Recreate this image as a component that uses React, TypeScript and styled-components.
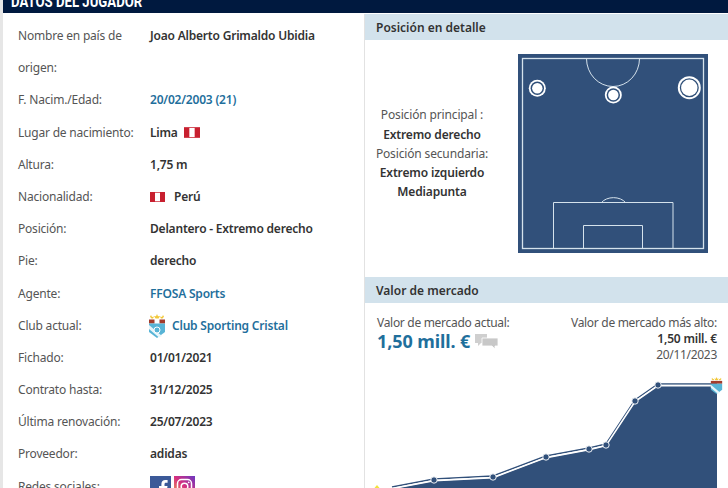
import styled, { createGlobalStyle } from "styled-components";

const GlobalStyle = createGlobalStyle`
  html, body {
    margin: 0;
    padding: 0;
    background: #fff;
  }
  body {
    font-family: "Noto Sans", "Liberation Sans", sans-serif;
    color: #333;
  }
`;

const Page = styled.div`
  width: 728px;
  height: 488px;
  overflow: hidden;
  background: #fff;
  border-left: 3px solid #e6e6e6;
  box-sizing: border-box;
`;

const TopBar = styled.div`
  height: 13px;
  margin-bottom: 1px;
  background: #00193f;
  overflow: hidden;
`;

const TopTitle = styled.h1`
  margin: -9px 0 0 8px;
  font-family: "Roboto", "Liberation Sans", sans-serif;
  font-size: 17px;
  line-height: 20px;
  font-weight: 700;
  color: #fff;
  text-transform: uppercase;
  transform: scaleX(0.775);
  transform-origin: left center;
`;

const Columns = styled.div`
  display: flex;
`;

const InfoPanel = styled.section`
  width: 362px;
  height: 474px;
  flex: none;
  box-sizing: border-box;
  padding: 6px 0 0 15px;
  border-right: 1px solid #e2e2e2;
`;

const InfoGrid = styled.dl`
  display: grid;
  grid-template-columns: 132px 1fr;
  grid-auto-rows: 32.2px;
  margin: 0;
  font-size: 12px;
  line-height: 32.2px;
`;

const Label = styled.dt`
  color: #555;
  letter-spacing: -0.2px;
`;

const Value = styled.dd<{ $link?: boolean; $gap?: number }>`
  display: flex;
  align-items: center;
  gap: ${(p) => p.$gap ?? 6}px;
  margin: 0;
  font-weight: 600;
  letter-spacing: -0.2px;
  white-space: nowrap;
  color: ${(p) => (p.$link ? "#1f6f9c" : "#333")};
`;

const CrestSlot = styled.span`
  display: flex;
  margin-left: -2px;
`;

const Side = styled.div`
  flex: 1;
  min-width: 0;
`;

const PanelHead = styled.h2`
  margin: 0;
  height: 26px;
  padding-left: 11px;
  background: #d2e2ec;
  font-size: 12px;
  line-height: 27px;
  font-weight: 600;
  color: #333;
`;

const PositionBody = styled.div`
  display: flex;
  align-items: center;
  gap: 19px;
  height: 237px;
  box-sizing: border-box;
  padding: 0 0 10px 0;
`;

const PositionText = styled.div`
  width: 134px;
  flex: none;
  text-align: center;
  font-size: 12px;
  line-height: 19.3px;
  letter-spacing: -0.15px;
  color: #555;
`;

const PositionName = styled.div`
  font-weight: 600;
  color: #333;
`;

const MarketBody = styled.div`
  padding: 12px 11px 0 12px;
  font-size: 12px;
  line-height: 16px;
`;

const MarketStats = styled.div`
  display: flex;
  justify-content: space-between;
  color: #555;
  letter-spacing: -0.3px;
`;

const CurrentValue = styled.div`
  display: flex;
  align-items: center;
  gap: 5px;
  margin-top: -1px;
  font-size: 18px;
  line-height: 22px;
  font-weight: 700;
  letter-spacing: -0.1px;
  color: #1f6f9c;
`;

const HighValue = styled.div`
  text-align: right;
`;

const HighAmount = styled.div`
  font-weight: 600;
  letter-spacing: -0.2px;
  color: #333;
`;

const Chart = styled.svg`
  display: block;
  margin: 7px 0 0 -12px;
`;

const SocialLink = styled.a`
  display: block;
  width: 21px;
  height: 21px;
`;

const Socials = styled.div`
  display: flex;
  gap: 3px;
`;

const Crest = ({ width, height }: { width: number; height: number }) => (
  <svg width={width} height={height} viewBox="0 0 18 24">
    <path d="M3 1l1 2 2-.5L5 4.500H3.500L2 2.700zM9 0l1 2.300 2-.3-1.300 2.500H7.500L6 2l2 .3zM15 1l1 1.700-1.500 1.800H13l-1-2 2 .5z" fill="#f2c83a" />
    <rect x="1" y="5" width="16" height="5" fill="#fff" />
    <rect x="1" y="5.500" width="5.500" height="4" fill="#a33c2c" />
    <rect x="11.500" y="5.500" width="5.500" height="4" fill="#a33c2c" />
    <path d="M1 9.500h16V18l-8 6-8-6z" fill="#58b4d6" />
    <path d="M1 11l13 11-3 1.500L1 15z" fill="#e8f5fa" />
    <circle cx="9" cy="16" r="3" fill="#58b4d6" stroke="#fff" />
  </svg>
);

const PeruFlag = ({ width, height }: { width: number; height: number }) => (
  <svg width={width} height={height} viewBox="0 0 15 10">
    <rect width="15" height="10" fill="#c8202f" />
    <rect x="5" y="0.700" width="5" height="8.600" fill="#fff" />
  </svg>
);

const PitchMarker = ({ x, y, big }: { x: number; y: number; big?: boolean }) => (
  <g>
    <circle cx={x} cy={y} r={big ? 11.5 : 8.5} fill="#fff" />
    <circle cx={x} cy={y} r={big ? 9.5 : 6.7} fill="#2f4f78" />
    <circle cx={x} cy={y} r={big ? 8.2 : 5.2} fill="#fff" />
  </g>
);

const Pitch = () => (
  <svg width="190" height="199" viewBox="0 0 190 199">
    <rect width="190" height="199" fill="#31507a" />
    <g fill="none" stroke="#d5e2ec" strokeWidth="1">
      <rect x="4.500" y="4.500" width="181" height="190" strokeWidth="1.300" />
      <path d="M68.500 4.500a26.500 28 0 0 0 53 0" />
      <path d="M35.500 194.500V148.500H155V194.500" />
      <path d="M65.500 194.500V171.500H124.500V194.500" />
      <path d="M83.500 148.500a14 10 0 0 1 24 0" />
    </g>
    <PitchMarker x={19.3} y={34.3} />
    <PitchMarker x={95.3} y={41} />
    <PitchMarker x={171.3} y={33.7} big />
  </svg>
);

const CommentIcon = () => (
  <svg width="23" height="15" viewBox="0 0 23 15">
    <path d="M0 0h12v9H6l-3 3V9H0z" fill="#cfcfcf" />
    <path d="M7 4h16v8h-3v3l-3-3H7z" fill="#c8c8c8" stroke="#fff" strokeWidth="0.800" />
  </svg>
);

// puntos del gráfico, relativos al svg (y=0 en la línea 370 de la página)
const points: [number, number][] = [
  [27, 118],
  [69, 110],
  [128, 107],
  [181, 87],
  [224, 79],
  [241, 75],
  [270, 31],
  [293, 15],
  [352, 15],
];

const toPath = (dy: number) =>
  points.map(([x, y], i) => `${i === 0 ? "M" : "L"}${x} ${y + dy}`).join(" ");

const MarketChart = () => (
  <Chart width="363" height="118" viewBox="0 0 363 118">
    <path d={`${toPath(1)} L352 118 L27 118 Z`} fill="#31507a" />
    <path d={toPath(-1)} fill="none" stroke="#31507a" strokeWidth="1.500" />
    <path d={toPath(0.6)} fill="none" stroke="#fff" strokeWidth="1.600" />
    {points.slice(1, -1).map(([x, y]) => (
      <circle key={x} cx={x} cy={y} r="3.200" fill="#31507a" stroke="#fff" strokeWidth="0.900" />
    ))}
    <path d="M12 115l2.500 3h-5z" fill="#f2e23a" />
    <svg x="345" y="7" width="13" height="17" viewBox="0 0 18 24">
      <path d="M3 1l1 2 2-.5L5 4.500H3.500L2 2.700zM9 0l1 2.300 2-.3-1.300 2.500H7.500L6 2l2 .3zM15 1l1 1.700-1.500 1.800H13l-1-2 2 .5z" fill="#f2c83a" />
      <rect x="1" y="5.500" width="16" height="4" fill="#a33c2c" />
      <path d="M1 9.500h16V18l-8 6-8-6z" fill="#58b4d6" />
      <path d="M1 11l13 11-3 1.500L1 15z" fill="#e8f5fa" />
    </svg>
  </Chart>
);

const App = () => (
  <>
    <GlobalStyle />
    <Page>
      <TopBar>
        <TopTitle>Datos del jugador</TopTitle>
      </TopBar>
      <Columns>
        <InfoPanel>
          <InfoGrid>
            <Label>Nombre en país de</Label>
            <Value>Joao Alberto Grimaldo Ubidia</Value>
            <Label>origen:</Label>
            <Value />
            <Label>F. Nacim./Edad:</Label>
            <Value $link>20/02/2003 (21)</Value>
            <Label>Lugar de nacimiento:</Label>
            <Value>
              Lima <PeruFlag width={16} height={11} />
            </Value>
            <Label>Altura:</Label>
            <Value>1,75 m</Value>
            <Label>Nacionalidad:</Label>
            <Value $gap={9}>
              <PeruFlag width={15} height={10} /> Perú
            </Value>
            <Label>Posición:</Label>
            <Value>Delantero - Extremo derecho</Value>
            <Label>Pie:</Label>
            <Value>derecho</Value>
            <Label>Agente:</Label>
            <Value $link>FFOSA Sports</Value>
            <Label>Club actual:</Label>
            <Value $link>
              <CrestSlot>
                <Crest width={18} height={24} />
              </CrestSlot>
              Club Sporting Cristal
            </Value>
            <Label>Fichado:</Label>
            <Value>01/01/2021</Value>
            <Label>Contrato hasta:</Label>
            <Value>31/12/2025</Value>
            <Label>Última renovación:</Label>
            <Value>25/07/2023</Value>
            <Label>Proveedor:</Label>
            <Value>adidas</Value>
            <Label>Redes sociales:</Label>
            <Value>
              <Socials>
                <SocialLink>
                  <svg width="21" height="21" viewBox="0 0 21 21">
                    <rect width="21" height="21" fill="#3b5998" />
                    <path d="M14.500 21v-8h2.600l.4-3h-3V8.200c0-.9.3-1.500 1.500-1.500h1.600V4.100c-.3 0-1.200-.1-2.300-.1-2.300 0-3.900 1.400-3.900 4V10H9v3h2.400v8z" fill="#fff" />
                  </svg>
                </SocialLink>
                <SocialLink>
                  <svg width="21" height="21" viewBox="0 0 21 21">
                    <defs>
                      <linearGradient id="ig" x1="0" y1="1" x2="1" y2="0">
                        <stop offset="0" stopColor="#f0b04a" />
                        <stop offset="0.5" stopColor="#d62f7f" />
                        <stop offset="1" stopColor="#6a38c2" />
                      </linearGradient>
                    </defs>
                    <rect width="21" height="21" fill="url(#ig)" />
                    <rect x="3.500" y="3.500" width="14" height="14" rx="4" fill="none" stroke="#fff" strokeWidth="1.500" />
                    <circle cx="10.500" cy="10.500" r="3.300" fill="none" stroke="#fff" strokeWidth="1.500" />
                    <circle cx="14.700" cy="6.300" r="0.900" fill="#fff" />
                  </svg>
                </SocialLink>
              </Socials>
            </Value>
          </InfoGrid>
        </InfoPanel>
        <Side>
          <PanelHead>Posición en detalle</PanelHead>
          <PositionBody>
            <PositionText>
              <div>Posición principal :</div>
              <PositionName>Extremo derecho</PositionName>
              <div>Posición secundaria:</div>
              <PositionName>Extremo izquierdo</PositionName>
              <PositionName>Mediapunta</PositionName>
            </PositionText>
            <Pitch />
          </PositionBody>
          <PanelHead>Valor de mercado</PanelHead>
          <MarketBody>
            <MarketStats>
              <div>
                Valor de mercado actual:
                <CurrentValue>
                  1,50 mill. € <CommentIcon />
                </CurrentValue>
              </div>
              <HighValue>
                Valor de mercado más alto:
                <HighAmount>1,50 mill. €</HighAmount>
                20/11/2023
              </HighValue>
            </MarketStats>
            <MarketChart />
          </MarketBody>
        </Side>
      </Columns>
    </Page>
  </>
);

export default App;
